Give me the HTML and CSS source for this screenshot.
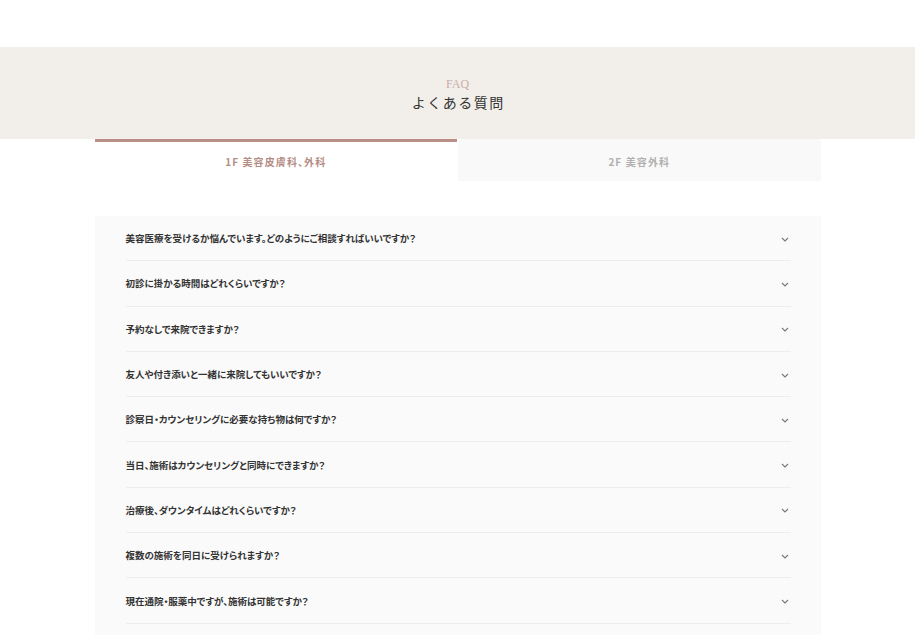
FILE: index.html
```html
<!DOCTYPE html>
<html lang="ja">
<head>
<meta charset="utf-8">
<title>FAQ</title>
<link rel="stylesheet" href="styles.css">
</head>
<body>
<div class="topbar"></div>
<section class="hero">
  <p class="hero-en">FAQ</p>
  <h1 class="hero-ja">よくある質問</h1>
</section>
<div class="tabs">
  <div class="tab tab-active">1F 美容皮膚科、外科</div>
  <div class="tab">2F 美容外科</div>
</div>
<div class="faq">
  <div class="faq-item"><span class="q">美容医療を受けるか悩んでいます。どのようにご相談すればいいですか？</span><svg class="chev" viewBox="0 0 8 5"><path d="M1 1 L4 4 L7 1" fill="none" stroke="#777" stroke-width="1.1"/></svg></div>
  <div class="faq-item"><span class="q">初診に掛かる時間はどれくらいですか？</span><svg class="chev" viewBox="0 0 8 5"><path d="M1 1 L4 4 L7 1" fill="none" stroke="#777" stroke-width="1.1"/></svg></div>
  <div class="faq-item"><span class="q">予約なしで来院できますか？</span><svg class="chev" viewBox="0 0 8 5"><path d="M1 1 L4 4 L7 1" fill="none" stroke="#777" stroke-width="1.1"/></svg></div>
  <div class="faq-item"><span class="q">友人や付き添いと一緒に来院してもいいですか？</span><svg class="chev" viewBox="0 0 8 5"><path d="M1 1 L4 4 L7 1" fill="none" stroke="#777" stroke-width="1.1"/></svg></div>
  <div class="faq-item"><span class="q">診察日・カウンセリングに必要な持ち物は何ですか？</span><svg class="chev" viewBox="0 0 8 5"><path d="M1 1 L4 4 L7 1" fill="none" stroke="#777" stroke-width="1.1"/></svg></div>
  <div class="faq-item"><span class="q">当日、施術はカウンセリングと同時にできますか？</span><svg class="chev" viewBox="0 0 8 5"><path d="M1 1 L4 4 L7 1" fill="none" stroke="#777" stroke-width="1.1"/></svg></div>
  <div class="faq-item"><span class="q">治療後、ダウンタイムはどれくらいですか？</span><svg class="chev" viewBox="0 0 8 5"><path d="M1 1 L4 4 L7 1" fill="none" stroke="#777" stroke-width="1.1"/></svg></div>
  <div class="faq-item"><span class="q">複数の施術を同日に受けられますか？</span><svg class="chev" viewBox="0 0 8 5"><path d="M1 1 L4 4 L7 1" fill="none" stroke="#777" stroke-width="1.1"/></svg></div>
  <div class="faq-item"><span class="q">現在通院・服薬中ですが、施術は可能ですか？</span><svg class="chev" viewBox="0 0 8 5"><path d="M1 1 L4 4 L7 1" fill="none" stroke="#777" stroke-width="1.1"/></svg></div>
</div>
</body>
</html>
```
FILE: styles.css
```css
html, body {
  margin: 0;
  padding: 0;
  background: #fff;
  font-family: "Noto Sans CJK JP", "Noto Sans", sans-serif;
  color: #333;
}
.topbar {
  height: 47px;
  background: #fff;
}
.hero {
  height: 92px;
  background: #f2efea;
  display: flex;
  flex-direction: column;
  align-items: center;
  box-sizing: border-box;
  padding-top: 29px;
}
.hero-en {
  margin: 0;
  font-family: "Liberation Serif", "DejaVu Serif", serif;
  font-size: 12px;
  line-height: 16px;
  color: #c9aca6;
}
.hero-ja {
  margin: 1px 0 0;
  font-size: 14px;
  line-height: 18px;
  font-weight: 400;
  letter-spacing: 1.5px;
  color: #333;
  padding-left: 1.5px;
}
.tabs {
  width: 726px;
  margin: 0 auto;
  display: flex;
  gap: 1px;
}
.tab {
  flex: 1;
  height: 42px;
  box-sizing: border-box;
  display: flex;
  align-items: center;
  justify-content: center;
  font-size: 10px;
  font-weight: 700;
  letter-spacing: 1.1px;
  font-feature-settings: "palt";
  color: #b0b0b0;
  background: #f9f9f9;
  border-top: 3px solid transparent;
}
.tab-active {
  background: #fff;
  color: #b58d85;
  border-top-color: #b98f87;
}
.faq {
  width: 726px;
  margin: 35px auto 0;
  background: #fafafa;
  padding: 0 30px 30px 31px;
  box-sizing: border-box;
}
.faq-item {
  height: 45.3px;
  display: flex;
  align-items: center;
  justify-content: space-between;
  border-bottom: 1px solid #efeceb;
  box-sizing: border-box;
}
.q {
  font-size: 9.5px;
  font-weight: 700;
  color: #333;
  font-feature-settings: "palt";
  letter-spacing: 0;
}
.chev {
  width: 8px;
  height: 5px;
  margin: 2px 2px 0 0;
}
```
